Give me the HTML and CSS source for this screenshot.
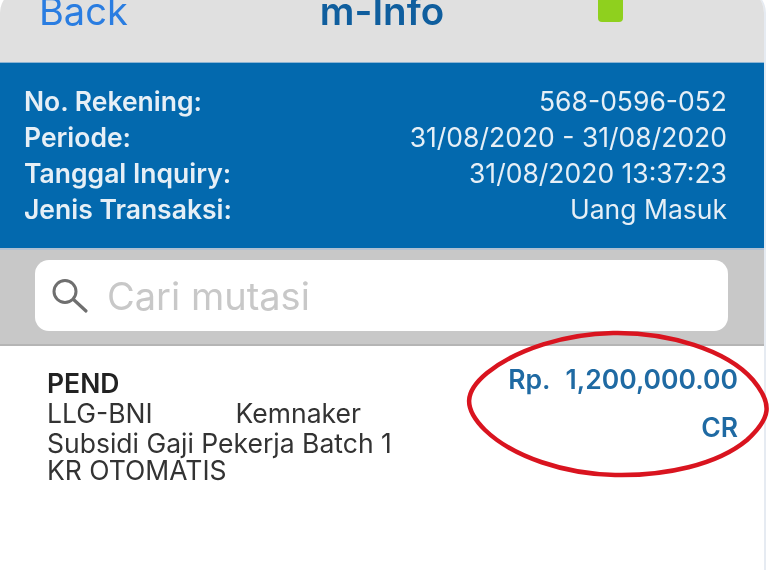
FILE: index.html
```html
<!DOCTYPE html>
<html lang="en">
<head>
    <meta charset="UTF-8">
    <meta name="viewport" content="width=device-width, initial-scale=1.0">
    <title>m-Info</title>
    <link rel="stylesheet" href="styles.css">
</head>
<body>
    <div class="phone">
        <header class="nav">
            <span class="nav-back">Back</span>
            <span class="nav-title">m-Info</span>
            <span class="nav-slot"><span class="nav-mark"></span></span>
        </header>

        <section class="summary">
            <div class="summary-row"><span class="summary-label">No. Rekening:</span><span>568-0596-052</span></div>
            <div class="summary-row"><span class="summary-label">Periode:</span><span>31/08/2020 - 31/08/2020</span></div>
            <div class="summary-row"><span class="summary-label">Tanggal Inquiry:</span><span>31/08/2020 13:37:23</span></div>
            <div class="summary-row"><span class="summary-label">Jenis Transaksi:</span><span>Uang Masuk</span></div>
        </section>

        <div class="search-bar">
            <div class="search-box">
                <svg class="search-icon" viewBox="0 0 38 36" width="38" height="36">
                    <circle cx="14" cy="13.5" r="11" fill="none" stroke="#6f6f6f" stroke-width="3"/>
                    <path d="M22.5 21.5 L35 33" fill="none" stroke="#6f6f6f" stroke-width="3.2" stroke-linecap="round"/>
                </svg>
                <span class="search-text">Cari mutasi</span>
            </div>
        </div>

        <section class="trx">
            <div class="trx-desc">
                <div class="trx-type">PEND</div>
                <div class="trx-line">LLG-BNI<span class="trx-name">Kemnaker</span></div>
                <div class="trx-line">Subsidi Gaji Pekerja Batch 1</div>
                <div class="trx-line trx-line-last">KR OTOMATIS</div>
            </div>
            <div class="trx-amount">
                <div class="trx-value"><span class="trx-cur">Rp.</span>1,200,000.00</div>
                <div class="trx-value trx-cr">CR</div>
            </div>
        </section>
    </div>

    <!-- marker circle drawn over the amount -->
    <svg class="marker" viewBox="0 0 305 148" width="305" height="148">
        <path d="M148 3 C203 2 262 20 288 50 C308 74 306 88 282 110 C252 135 200 146 150 145 C100 144 48 127 20 100 C-2 78 -1 62 22 43 C52 19 100 4 148 3 Z" fill="none" stroke="#d9141f" stroke-width="4.5"/>
    </svg>
</body>
</html>
```

FILE: styles.css
```css
html, body {
    margin: 0;
    padding: 0;
}

body {
    position: relative;
    width: 769px;
    height: 570px;
    overflow: hidden;
    background: #fff;
    font-family: Inter, "Liberation Sans", Arial, sans-serif;
}

.phone {
    width: 764px;
    height: 581px;
    margin-top: -11px;
    background: #fff;
    border-right: 2px solid #e6ebf2;
    border-radius: 24px 24px 0 0;
    overflow: hidden;
    filter: blur(0.5px);
}

.nav {
    height: 73px;
    background: #e0e0e0;
    display: grid;
    grid-template-columns: 1fr auto 1fr;
    align-items: start;
}

.nav-back {
    padding-left: 39px;
    font-size: 38px;
    line-height: 44px;
    color: #2a7de1;
}

.nav-title {
    font-size: 38.5px;
    line-height: 44px;
    font-weight: 600;
    color: #0f5e9e;
}

.nav-slot {
    height: 33px;
    display: flex;
    align-items: flex-end;
    justify-content: flex-end;
    padding-right: 141px;
}

.nav-mark {
    width: 25px;
    height: 40px;
    background: #8fd01e;
    border-radius: 4px;
}

.summary {
    height: 186px;
    box-sizing: border-box;
    background: #0369ae;
    border-top: 1px solid #8db4d3;
    padding: 20px 37px 0 24px;
    color: #e6eff6;
    font-size: 26.5px;
}

.summary-row {
    display: flex;
    justify-content: space-between;
    height: 36px;
    line-height: 36px;
}

.summary-label {
    font-weight: 600;
}

.search-bar {
    height: 98px;
    box-sizing: border-box;
    background: #c8c8c8;
    border-bottom: 2px solid #b5b5b5;
    border-top: 2px solid #b0c0d2;
    padding: 10px 36px 0 35px;
}

.search-box {
    height: 71px;
    background: #fff;
    border-radius: 14px;
    display: flex;
    align-items: center;
    padding-left: 16px;
}

.search-icon {
    flex: none;
    margin-right: 18px;
}

.search-text {
    font-size: 38px;
    color: #c8c8c8;
}

.trx {
    display: flex;
    justify-content: space-between;
    padding: 22px 26px 0 47px;
}

.trx-desc {
    color: #333;
    font-size: 26.5px;
}

.trx-type {
    font-weight: 600;
    line-height: 30px;
    color: #222;
}

.trx-line {
    line-height: 30px;
}

.trx-line-last {
    line-height: 24px;
}

.trx-name {
    margin-left: 83px;
}

.trx-amount {
    margin-top: -4px;
    text-align: right;
    color: #1f6aa3;
    font-weight: 600;
    font-size: 26.5px;
}

.trx-value {
    line-height: 30px;
}

.trx-cur {
    margin-right: 15px;
}

.trx-cr {
    margin-top: 18px;
}

.marker {
    position: absolute;
    left: 465px;
    top: 330px;
}
```
